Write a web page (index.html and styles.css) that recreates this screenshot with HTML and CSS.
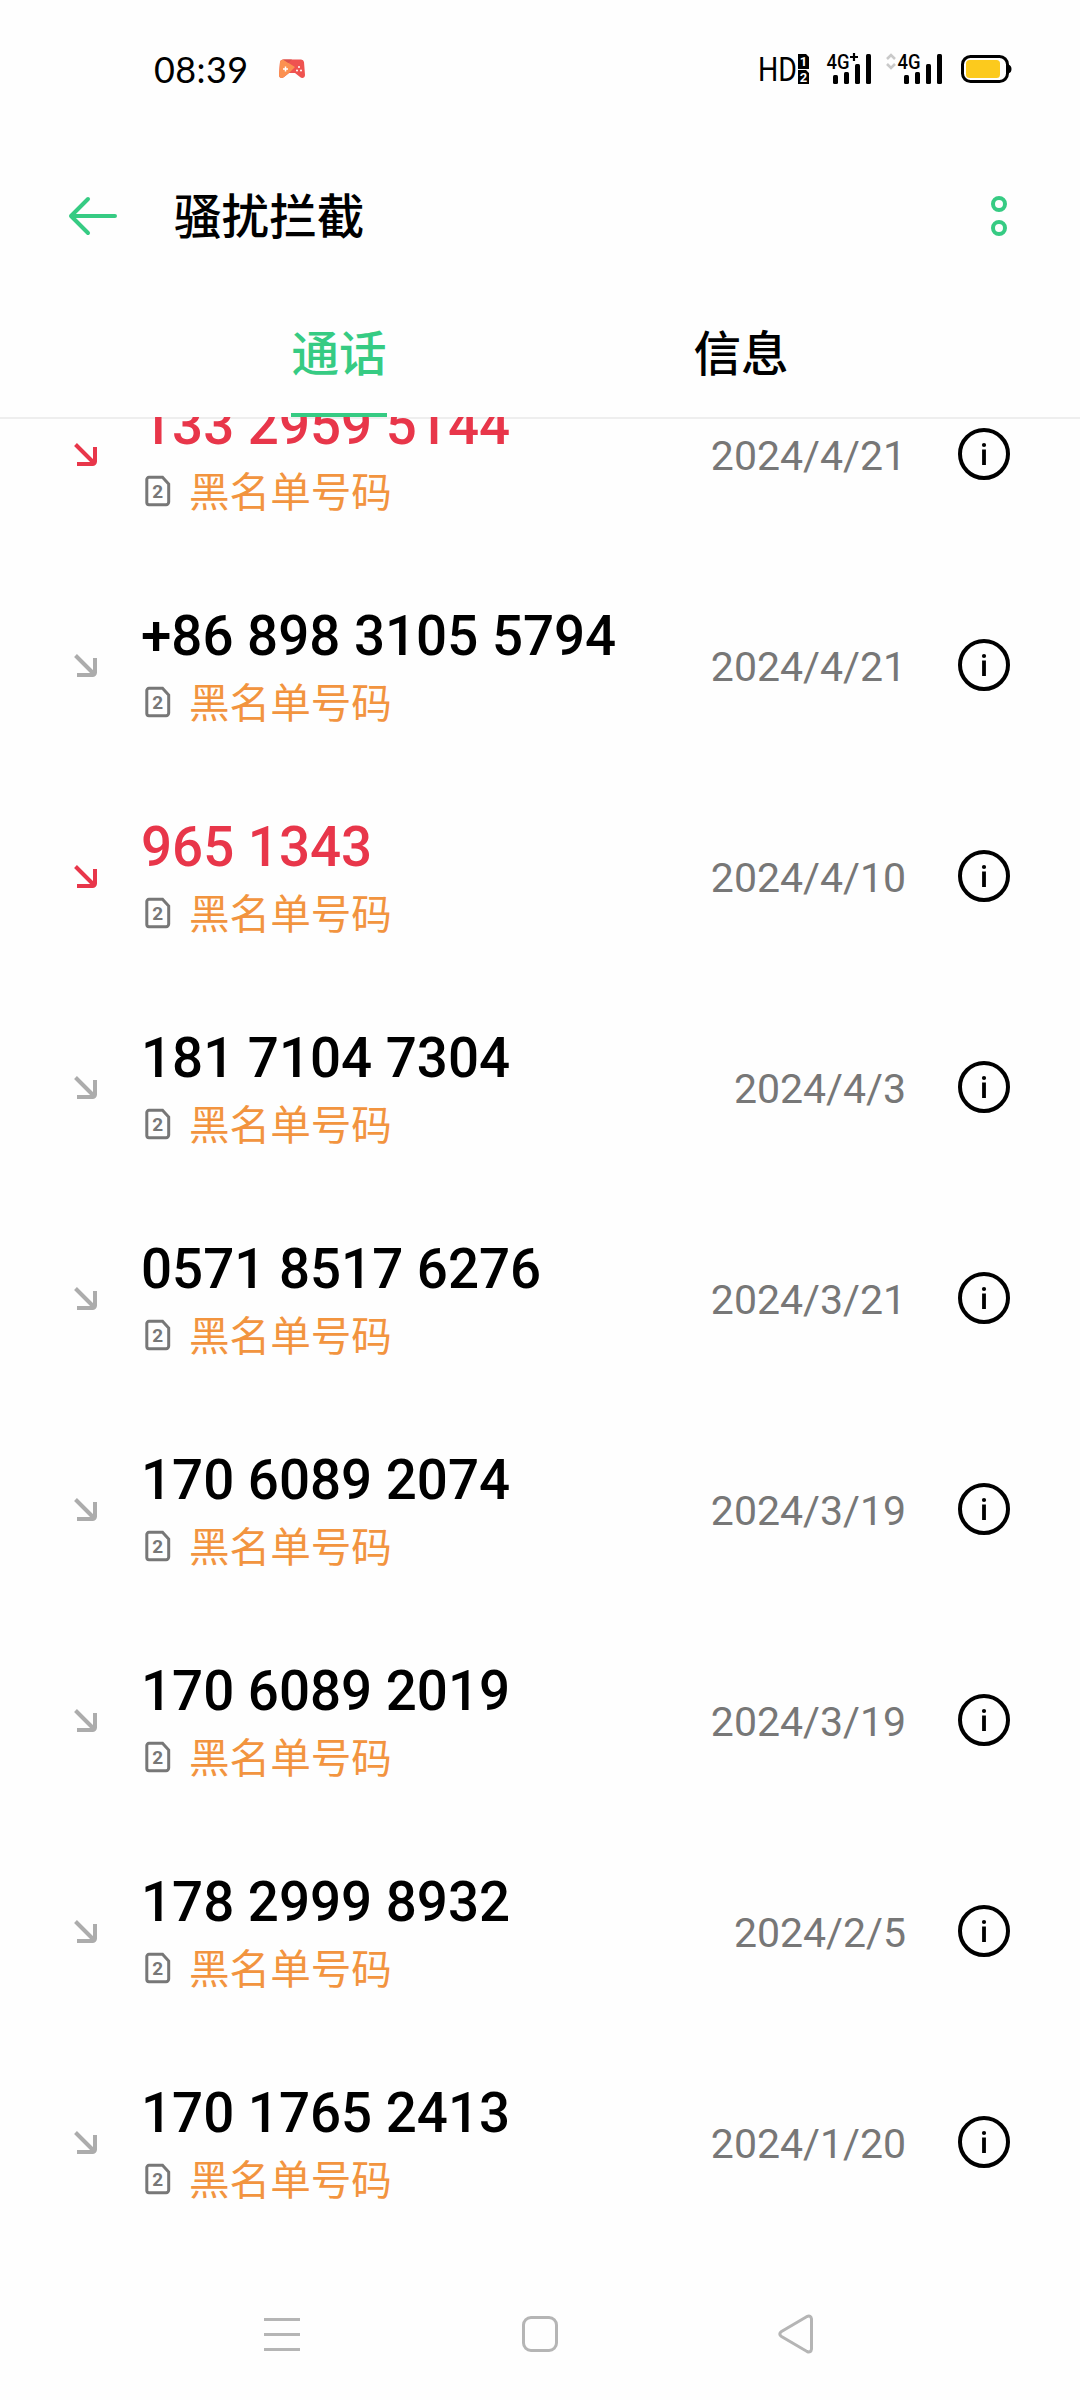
FILE: index.html
```
<!DOCTYPE html>
<html lang="zh-CN">
  <head>
    <meta charset="UTF-8">
    <meta name="viewport" content="width=device-width,initial-scale=1.0">
    <title>骚扰拦截</title>
    <link rel="stylesheet" href="styles.css">
  </head>
  <body>
    <svg class="defs" aria-hidden="true">
      <symbol id="arrow" viewBox="0 0 24 24"><path d="M1.5 1.5 21 21M21 4v14.5a2.5 2.5 0 0 1-2.5 2.5H3" fill="none" stroke="currentColor" stroke-width="4"/></symbol>
      <symbol id="sim" viewBox="0 0 26 32">
        <path d="M4 2.3h13.5l6.2 6.7v18a2.7 2.7 0 0 1-2.7 2.7H4A2.2 2.2 0 0 1 1.8 27.5v-23A2.2 2.2 0 0 1 4 2.3z" fill="none" stroke="currentColor" stroke-width="3"/>
        <text x="12.8" y="22.8" text-anchor="middle" font-size="19" font-weight="700" fill="currentColor">2</text>
      </symbol>
      <symbol id="info" viewBox="0 0 52 52">
        <circle cx="26" cy="26" r="24" fill="none" stroke="currentColor" stroke-width="4"/>
        <circle cx="26" cy="17" r="2.1"/>
        <path d="M24.1 21.5h3.8V37h-3.800z"/>
      </symbol>
    </svg>

    <div class="status">
      <span class="time">08:39</span>
      <svg class="game" width="26" height="20" viewBox="0 0 26 20">
        <path d="M4 .5h18a3 3 0 0 1 3 2.500l1 13c0 3-3 4-5 2l-5-4h-6l-5 4c-2 2-5 1-5-2L1 3A3 3 0 0 1 4 .500z" fill="#ef5350"/>
        <path d="M4 .500 16 8l-6 6-5 4c-2 2-5 1-5-2L1 3A3 3 0 0 1 4 .500z" fill="#fb9150"/>
        <path d="M4 .500h9L9.500 4z" fill="#d9534c"/>
        <path d="M6.500 7.500v5M4 10h5" stroke="#fff" stroke-width="1.500"/>
        <g fill="#fff"><circle cx="20" cy="8" r="1"/><circle cx="18" cy="11.500" r="1"/><circle cx="22" cy="11.500" r="1"/></g>
      </svg>
      <svg class="signals" width="252" height="34" viewBox="0 0 252 34">
        <text x="-2" y="27" font-size="33" textLength="39" lengthAdjust="spacingAndGlyphs">HD</text>
        <path d="M38 0h8l3 3v12H38zM38 16h8l3 3v11H38z"/>
        <text x="43.500" y="12" font-size="13" text-anchor="middle" class="slot">1</text>
        <text x="43.500" y="27.500" font-size="13" text-anchor="middle" class="slot">2</text>
        <text x="66.500" y="14.500" font-size="20.500" textLength="23" lengthAdjust="spacingAndGlyphs" class="net">4G</text>
        <path d="M90 3h8M94-1v8" stroke="#000" stroke-width="2.200"/>
        <g id="bars"><rect x="73" y="21" width="5" height="9" rx="1.500"/><rect x="84" y="18" width="5" height="12" rx="1.500"/><rect x="95" y="10" width="5" height="20" rx="1.500"/><rect x="106" y="0" width="5" height="30" rx="1.500"/></g>
        <path d="m127 5 4-4 4 4M127 10l4 4 4-4" fill="none" stroke="#c9c9c9" stroke-width="2.500"/>
        <text x="137.500" y="14.500" font-size="20.500" textLength="23" lengthAdjust="spacingAndGlyphs" class="net">4G</text>
        <use href="#bars" x="71"/>
        <rect x="202.500" y="2.500" width="45" height="25" rx="8" fill="none" stroke="#000" stroke-width="3"/>
        <rect x="206" y="6" width="34" height="18" rx="3.500" fill="#fcca1d"/>
        <path d="M248.500 10.500q3 1 3 4.500t-3 4.500z"/>
      </svg>
    </div>

    <header>
      <svg width="50" height="40" viewBox="0 0 50 40"><path d="M20 3 3 20l17 17M3 20h44" fill="none" stroke="currentColor" stroke-width="4" stroke-linecap="round" stroke-linejoin="round"/></svg>
      <h1>骚扰拦截</h1>
      <svg width="16" height="40" viewBox="0 0 16 40" fill="none" stroke="currentColor" stroke-width="4"><circle cx="8" cy="8" r="6"/><circle cx="8" cy="32" r="6"/></svg>
    </header>

    <nav class="tabs">
      <div class="tab"><span class="active">通话</span></div>
      <div class="tab"><span>信息</span></div>
    </nav>

    <main>
      <ul class="calls">
        <li class="missed">
          <svg class="dir"><use href="#arrow"/></svg>
          <div class="caller"><b>133 2959 5144</b><p><svg class="sim"><use href="#sim"/></svg>黑名单号码</p></div>
          <time>2024/4/21</time><svg class="info"><use href="#info"/></svg>
        </li>
        <li>
          <svg class="dir"><use href="#arrow"/></svg>
          <div class="caller"><b>+86 898 3105 5794</b><p><svg class="sim"><use href="#sim"/></svg>黑名单号码</p></div>
          <time>2024/4/21</time><svg class="info"><use href="#info"/></svg>
        </li>
        <li class="missed">
          <svg class="dir"><use href="#arrow"/></svg>
          <div class="caller"><b>965 1343</b><p><svg class="sim"><use href="#sim"/></svg>黑名单号码</p></div>
          <time>2024/4/10</time><svg class="info"><use href="#info"/></svg>
        </li>
        <li>
          <svg class="dir"><use href="#arrow"/></svg>
          <div class="caller"><b>181 7104 7304</b><p><svg class="sim"><use href="#sim"/></svg>黑名单号码</p></div>
          <time>2024/4/3</time><svg class="info"><use href="#info"/></svg>
        </li>
        <li>
          <svg class="dir"><use href="#arrow"/></svg>
          <div class="caller"><b>0571 8517 6276</b><p><svg class="sim"><use href="#sim"/></svg>黑名单号码</p></div>
          <time>2024/3/21</time><svg class="info"><use href="#info"/></svg>
        </li>
        <li>
          <svg class="dir"><use href="#arrow"/></svg>
          <div class="caller"><b>170 6089 2074</b><p><svg class="sim"><use href="#sim"/></svg>黑名单号码</p></div>
          <time>2024/3/19</time><svg class="info"><use href="#info"/></svg>
        </li>
        <li>
          <svg class="dir"><use href="#arrow"/></svg>
          <div class="caller"><b>170 6089 2019</b><p><svg class="sim"><use href="#sim"/></svg>黑名单号码</p></div>
          <time>2024/3/19</time><svg class="info"><use href="#info"/></svg>
        </li>
        <li>
          <svg class="dir"><use href="#arrow"/></svg>
          <div class="caller"><b>178 2999 8932</b><p><svg class="sim"><use href="#sim"/></svg>黑名单号码</p></div>
          <time>2024/2/5</time><svg class="info"><use href="#info"/></svg>
        </li>
        <li>
          <svg class="dir"><use href="#arrow"/></svg>
          <div class="caller"><b>170 1765 2413</b><p><svg class="sim"><use href="#sim"/></svg>黑名单号码</p></div>
          <time>2024/1/20</time><svg class="info"><use href="#info"/></svg>
        </li>
      </ul>
    </main>

    <footer>
      <svg width="36" height="40" viewBox="0 0 36 40"><path d="M0 5.500h36M0 20.500h36M0 35.500h36"/></svg>
      <svg width="36" height="40" viewBox="0 0 36 40"><rect x="1.500" y="3.500" width="33" height="33" rx="7.500"/></svg>
      <svg width="36" height="40" viewBox="2 0 36 40"><path d="M29 2.500 3.500 17.500q-3.500 2.500 0 5L29 37.500q4 1.500 4.500-2.500V5q-.5-4-4.500-2.500z"/></svg>
    </footer>
  </body>
</html>
```
FILE: styles.css
```
:root{--green:#36cb83;--red:#e8364a;--orange:#f2943f;--grey:#777;--bg:#fefefe}
*{box-sizing:border-box;margin:0;padding:0}
body{width:1080px;height:2400px;overflow:hidden;display:flex;flex-direction:column;background:var(--bg);color:#000;font-family:Roboto,"Noto Sans CJK SC",sans-serif}
svg{display:block;flex:none;overflow:visible}
.defs{display:none}

.status{height:138px;padding:0 68px 0 154px;display:flex;align-items:center}
.time{font:400 36px/40px Lato,sans-serif;letter-spacing:.4px}
.game{margin-left:30px}
.signals{margin-left:auto;margin-top:4px}
.net{font-weight:500}
.slot{fill:#fff;font-weight:700}

header{height:156px;padding:0 73px 0 68px;display:flex;align-items:center;color:var(--green)}
h1{margin-left:56px;margin-right:auto;padding-top:4px;font-size:47.600px;line-height:60px;font-weight:500;color:#000}

.tabs{height:123px;padding:0 138px;display:flex}
.tab{flex:1;display:flex;justify-content:center}
.tab span{height:123px;font-size:47.600px;line-height:123px;font-weight:500;border-bottom:4px solid transparent}
.tab .active{color:var(--green);border-color:var(--green)}

main{flex:1;overflow:hidden;box-shadow:inset 0 2px #eee}
/* list is scrolled partway through the first row */
.calls{list-style:none;margin-top:-68px}
.calls li{height:211px;padding:0 70px 0 74px;display:flex;align-items:center}
.dir{width:24px;height:24px;color:#acacac}
.caller{flex:1;margin-left:43px;padding-top:9px}
.caller b{display:block;font-size:54.700px;line-height:68px;font-weight:500}
.caller p{display:flex;align-items:center;font-size:40.600px;line-height:68px;color:var(--orange)}
.sim{width:26px;height:32px;margin:-4px 18px 0 4px;color:var(--grey)}
.missed .dir,.missed b{color:var(--red)}
time{font-size:41px;line-height:48px;padding-top:3px;color:var(--grey)}
.info{width:52px;height:52px;margin:-2px 0 0 52px}

footer{height:133px;padding:0 264px;display:flex;align-items:center;justify-content:space-between;fill:none;stroke:#b5b5b5;stroke-width:3}
```
